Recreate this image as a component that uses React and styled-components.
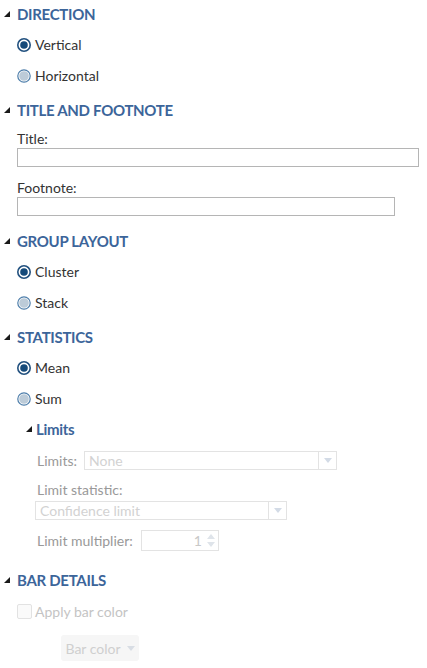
import styled, { createGlobalStyle } from "styled-components";

const GlobalStyle = createGlobalStyle`
  body {
    margin: 0;
    background: #ffffff;
    font-family: Lato, "Noto Sans", sans-serif;
    color: #333333;
  }
`;

const Panel = styled.div`
  width: 427px;
  padding-top: 4px;
  display: flex;
  flex-direction: column;
`;

const Section = styled.section`
  display: flex;
  flex-direction: column;
  margin-bottom: ${(p) => p.$gap ?? 9}px;
`;

const HeaderRow = styled.div`
  height: 20px;
  display: flex;
  align-items: center;
  padding-left: ${(p) => (p.$sub ? 26 : 4)}px;
  gap: ${(p) => (p.$sub ? 4 : 7)}px;
  margin-top: ${(p) => p.$top ?? 0}px;
`;

const HeaderText = styled.span`
  font-size: 15px;
  font-weight: 700;
  color: #3c659a;
  letter-spacing: -0.3px;
`;

const Caret = () => (
  <svg width="6" height="6" viewBox="0 0 6 6">
    <path d="M6 0 L6 6 L0 6 Z" fill="#1a1a1a" />
  </svg>
);

const Radios = styled.div`
  display: flex;
  flex-direction: column;
  margin-top: 5px;
`;

const RadioRow = styled.label`
  height: 31px;
  display: flex;
  align-items: center;
  padding-left: 17px;
  gap: 4px;
  font-size: 14px;
  color: #333;
`;

const Radio = ({ checked }) => (
  <svg width="14" height="14" viewBox="0 0 14 14">
    {checked ? (
      <>
        <circle cx="7" cy="7" r="6.2" fill="#fff" stroke="#22517f" strokeWidth="1.6" />
        <circle cx="7" cy="7" r="3.8" fill="#154a7a" />
      </>
    ) : (
      <>
        <circle cx="7" cy="7" r="6.2" fill="#fff" stroke="#4f7fab" strokeWidth="1.2" />
        <circle cx="7" cy="7" r="4.8" fill="#bccbd8" />
      </>
    )}
  </svg>
);

const FieldLabel = styled.div`
  height: 16px;
  line-height: 16px;
  padding-left: ${(p) => p.$left ?? 17}px;
  font-size: 14px;
  color: ${(p) => (p.$dim ? "#999" : "#333")};
  margin-top: ${(p) => p.$top}px;
`;

const TextInput = styled.input`
  box-sizing: border-box;
  margin: 1px 0 0 17px;
  width: ${(p) => p.$w}px;
  height: 19px;
  border: 1px solid #b5b5b5;
  padding: 0 4px;
  font-family: inherit;
  outline: none;
`;

const Row = styled.div`
  height: 20px;
  display: flex;
  align-items: center;
  padding-left: ${(p) => p.$left ?? 37}px;
  margin-top: ${(p) => p.$top ?? 0}px;
`;

const DimLabel = styled.span`
  font-size: 14px;
  color: ${(p) => p.$color ?? "#999"};
`;

const SelectBox = styled.div`
  box-sizing: border-box;
  width: ${(p) => p.$w}px;
  height: 19px;
  border: 1px solid #e3e3e3;
  display: flex;
  align-items: stretch;
  margin-left: ${(p) => p.$ml ?? 0}px;
`;

const SelectValue = styled.span`
  flex: 1;
  font-size: 14px;
  color: #d2d2d2;
  padding-left: 4px;
  line-height: 17px;
`;

const SelectArrow = styled.span`
  width: 17px;
  border-left: 1px solid #e3e3e3;
  display: flex;
  align-items: center;
  justify-content: center;
`;

const DownArrow = ({ color = "#d3dbe6" }) => (
  <svg width="8" height="5" viewBox="0 0 8 5">
    <path d="M0 0 L8 0 L4 5 Z" fill={color} />
  </svg>
);

const UpArrow = ({ color = "#dfe4ea" }) => (
  <svg width="8" height="5" viewBox="0 0 8 5">
    <path d="M0 5 L8 5 L4 0 Z" fill={color} />
  </svg>
);

const Spinner = styled.div`
  box-sizing: border-box;
  width: 78px;
  height: 21px;
  border: 1px solid #e3e3e3;
  display: flex;
  align-items: center;
  margin-left: 8px;
`;

const SpinValue = styled.span`
  flex: 1;
  text-align: right;
  font-size: 14px;
  color: #c8c8c8;
  padding-right: 3px;
`;

const SpinArrows = styled.span`
  width: 13px;
  display: flex;
  flex-direction: column;
  align-items: center;
  gap: 3px;
`;

const CheckRow = styled.label`
  height: 20px;
  display: flex;
  align-items: center;
  padding-left: 17px;
  gap: 3px;
  margin-top: 11px;
`;

const CheckBox = styled.span`
  box-sizing: border-box;
  width: 15px;
  height: 15px;
  border: 1px solid #e2e2e2;
  border-radius: 2px;
  background: #fafafa;
`;

const ColorButton = styled.div`
  align-self: flex-start;
  margin: 14px 0 0 61px;
  width: 78px;
  height: 26px;
  border-radius: 3px;
  background: #f6f6f6;
  display: flex;
  align-items: center;
  justify-content: center;
  gap: 6px;
  font-size: 14px;
  color: #cfcfcf;
`;

const Header = ({ children, sub, top }) => (
  <HeaderRow $sub={sub} $top={top}>
    <Caret />
    <HeaderText>{children}</HeaderText>
  </HeaderRow>
);

const App = () => (
  <>
    <GlobalStyle />
    <Panel>
      <Section>
        <Header>DIRECTION</Header>
        <Radios>
          <RadioRow><Radio checked />Vertical</RadioRow>
          <RadioRow><Radio />Horizontal</RadioRow>
        </Radios>
      </Section>

      <Section $gap={15}>
        <Header>TITLE AND FOOTNOTE</Header>
        <FieldLabel $top={11}>Title:</FieldLabel>
        <TextInput $w={402} />
        <FieldLabel $top={13}>Footnote:</FieldLabel>
        <TextInput $w={378} />
      </Section>

      <Section>
        <Header>GROUP LAYOUT</Header>
        <Radios>
          <RadioRow><Radio checked />Cluster</RadioRow>
          <RadioRow><Radio />Stack</RadioRow>
        </Radios>
      </Section>

      <Section $gap={0}>
        <Header>STATISTICS</Header>
        <Radios>
          <RadioRow><Radio checked />Mean</RadioRow>
          <RadioRow><Radio />Sum</RadioRow>
        </Radios>
        <Header sub top={5}>Limits</Header>
        <Row $top={11}>
          <DimLabel>Limits:</DimLabel>
          <SelectBox $w={253} $ml={7}>
            <SelectValue>None</SelectValue>
            <SelectArrow><DownArrow /></SelectArrow>
          </SelectBox>
        </Row>
        <FieldLabel $top={12} $left={37} $dim>
          Limit statistic:
        </FieldLabel>
        <Row $left={35} $top={2}>
          <SelectBox $w={252}>
            <SelectValue>Confidence limit</SelectValue>
            <SelectArrow><DownArrow /></SelectArrow>
          </SelectBox>
        </Row>
        <Row $top={10}>
          <DimLabel>Limit multiplier:</DimLabel>
          <Spinner>
            <SpinValue>1</SpinValue>
            <SpinArrows>
              <UpArrow />
              <DownArrow color="#dfe4ea" />
            </SpinArrows>
          </Spinner>
        </Row>
      </Section>

      <Section $gap={0}>
        <Header top={20}>BAR DETAILS</Header>
        <CheckRow>
          <CheckBox />
          <DimLabel $color="#c4c4c4">Apply bar color</DimLabel>
        </CheckRow>
        <ColorButton>
          Bar color
          <DownArrow color="#d8dde4" />
        </ColorButton>
      </Section>
    </Panel>
  </>
);

export default App;
